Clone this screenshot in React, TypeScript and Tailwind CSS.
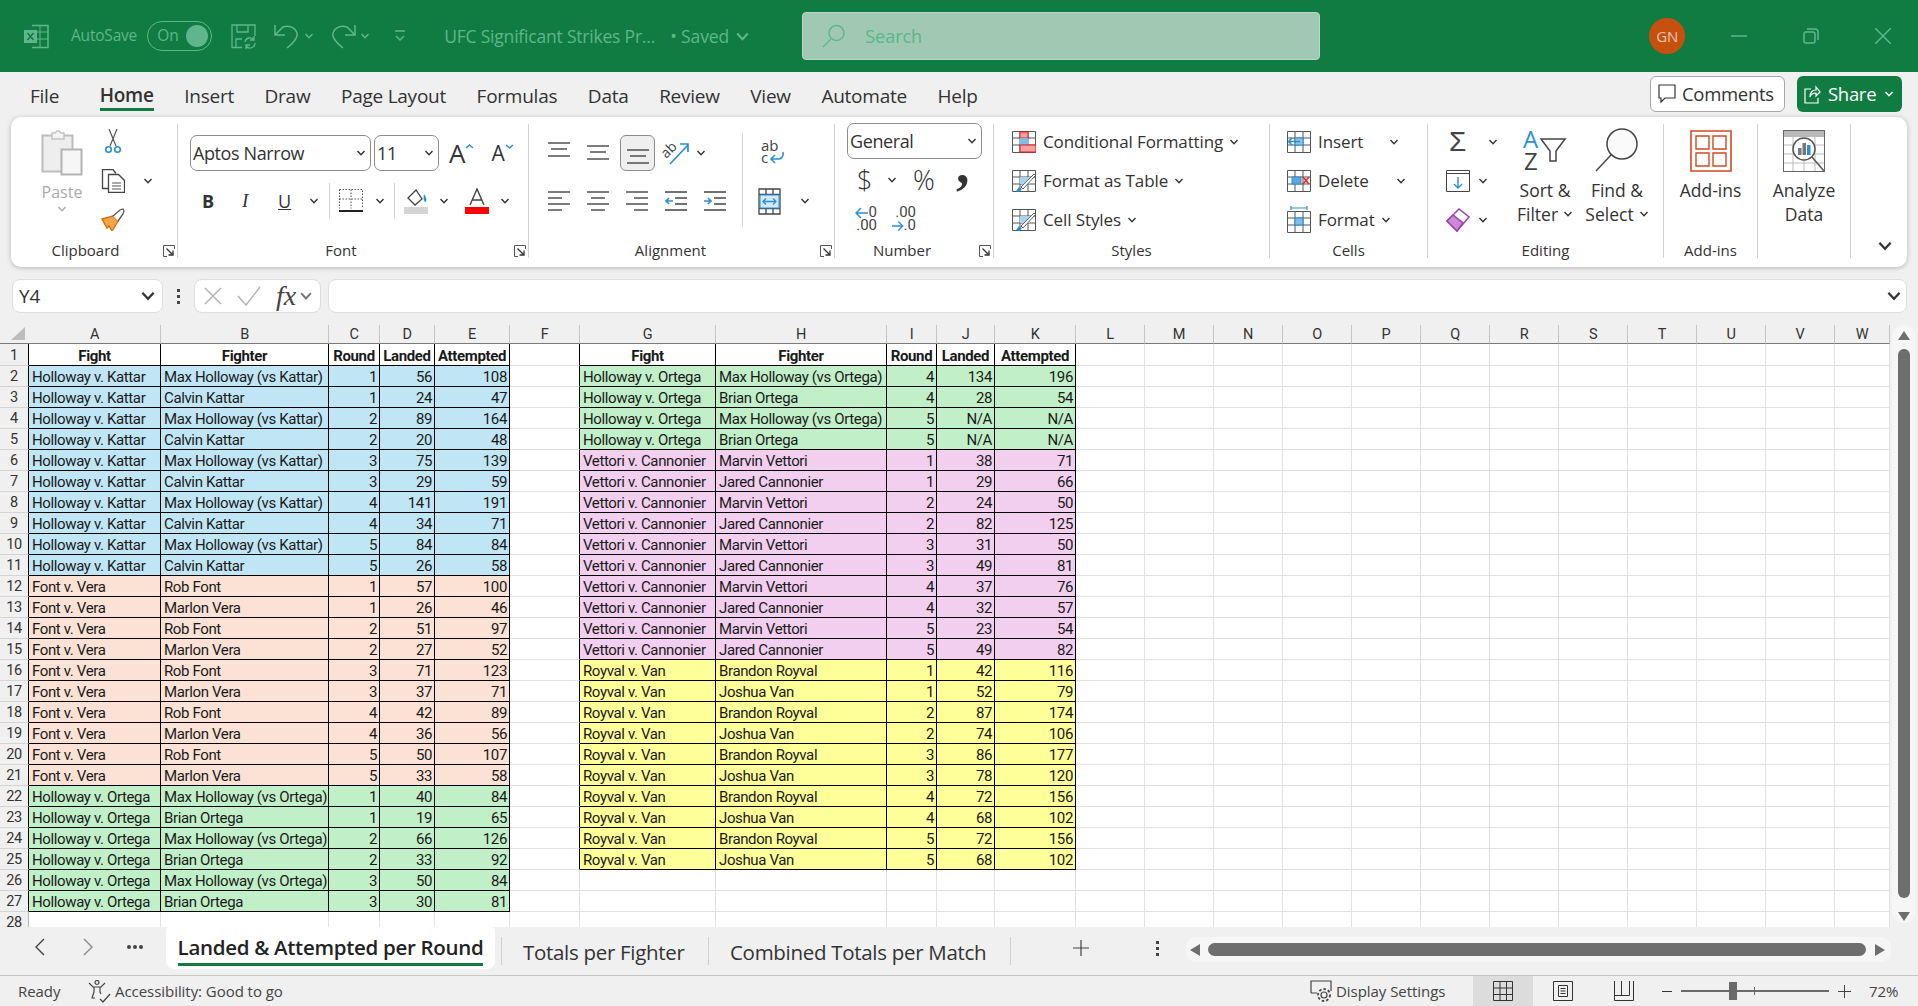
import React from "react";

type Row = [string, string, number, number | string, number | string, string];

const BLUE = "bg-[#c0e6f5]";
const ORANGE = "bg-[#fbe2d5]";
const GREEN = "bg-[#c1f0c8]";
const PURPLE = "bg-[#f2ceef]";
const YELLOW = "bg-[#ffff99]";

const expand = (
  fight: string,
  a: string,
  b: string,
  fill: string,
  data: [number, number | string, number | string][]
): Row[] => data.map((d, i) => [fight, i % 2 === 0 ? a : b, d[0], d[1], d[2], fill]);

const LEFT_ROWS: Row[] = [
  ...expand("Holloway v. Kattar", "Max Holloway (vs Kattar)", "Calvin Kattar", BLUE, [
    [1, 56, 108], [1, 24, 47], [2, 89, 164], [2, 20, 48], [3, 75, 139],
    [3, 29, 59], [4, 141, 191], [4, 34, 71], [5, 84, 84], [5, 26, 58],
  ]),
  ...expand("Font v. Vera", "Rob Font", "Marlon Vera", ORANGE, [
    [1, 57, 100], [1, 26, 46], [2, 51, 97], [2, 27, 52], [3, 71, 123],
    [3, 37, 71], [4, 42, 89], [4, 36, 56], [5, 50, 107], [5, 33, 58],
  ]),
  ...expand("Holloway v. Ortega", "Max Holloway (vs Ortega)", "Brian Ortega", GREEN, [
    [1, 40, 84], [1, 19, 65], [2, 66, 126], [2, 33, 92], [3, 50, 84], [3, 30, 81],
  ]),
];

const RIGHT_ROWS: Row[] = [
  ...expand("Holloway v. Ortega", "Max Holloway (vs Ortega)", "Brian Ortega", GREEN, [
    [4, 134, 196], [4, 28, 54], [5, "N/A", "N/A"], [5, "N/A", "N/A"],
  ]),
  ...expand("Vettori v. Cannonier", "Marvin Vettori", "Jared Cannonier", PURPLE, [
    [1, 38, 71], [1, 29, 66], [2, 24, 50], [2, 82, 125], [3, 31, 50],
    [3, 49, 81], [4, 37, 76], [4, 32, 57], [5, 23, 54], [5, 49, 82],
  ]),
  ...expand("Royval v. Van", "Brandon Royval", "Joshua Van", YELLOW, [
    [1, 42, 116], [1, 52, 79], [2, 87, 174], [2, 74, 106], [3, 86, 177],
    [3, 78, 120], [4, 72, 156], [4, 68, 102], [5, 72, 156], [5, 68, 102],
  ]),
];

const HEADERS = ["Fight", "Fighter", "Round", "Landed", "Attempted"];
const COLUMNS = "ABCDEFGHIJKLMNOPQRSTUVW".split("");
const TABS = ["File", "Home", "Insert", "Draw", "Page Layout", "Formulas", "Data", "Review", "View", "Automate", "Help"];

const DIM = "#5fb68c";
const INK = "#444444";
const BLUE_ICON = "#2b8fd3";

const Chev = ({ color = "#333333", size = 10 }: { color?: string; size?: number }) => (
  <svg width={size} height={size} viewBox="0 0 10 10" fill="none" className="shrink-0">
    <path d="M1.5 3 5 6.8 8.5 3" stroke={color} strokeWidth="1.4" />
  </svg>
);

const Launcher = () => (
  <svg width="12" height="12" viewBox="0 0 12 12" fill="none" className="shrink-0">
    <path d="M11.5 4V.5H.5v11H4" stroke="#555" />
    <path d="M3.5 3.5 10 10M10 5.5V10H5.5" stroke="#333" strokeWidth="1.3" />
  </svg>
);

const Lines = ({ ys, w = 22, h = 24 }: { ys: [number, number, number][]; w?: number; h?: number }) => (
  <svg width={w} height={h} viewBox={`0 0 ${w} ${h}`} fill="none" className="shrink-0">
    {ys.map((l, i) => (
      <path key={i} d={`M${l[0]} ${l[2]}H${l[1]}`} stroke={INK} strokeWidth="1.4" />
    ))}
  </svg>
);

const GridBase = ({ children }: { children?: React.ReactNode }) => (
  <svg width="24" height="22" viewBox="0 0 24 22" fill="none" className="shrink-0">
    <path d="M.5.5h23v21H.5zM.5 7h23M.5 14h23M8 .5v21M16 .5v21" stroke="#555" />
    {children}
  </svg>
);

const BrushOver = () => (
  <g>
    <path d="M8 7h10v7H8z" fill="#a9d3f2" />
    <path d="M4 21l3-4 3 2-3 3z" fill={BLUE_ICON} />
    <path d="M9 17 22 4l1.5 1.5L11 19z" fill="#fff" stroke="#555" strokeWidth=".9" />
  </g>
);

const Paste = () => (
  <svg width="42" height="46" viewBox="0 0 42 46" fill="none">
    <path d="M1.5 5.5h30v36h-30z" fill="#eeeeee" stroke="#bdbdbd" strokeWidth="2" />
    <path d="M11 5V3h3l2-2h2l2 2h3v6H11z" fill="#f4f4f4" stroke="#c4c4c4" strokeWidth="1.5" />
    <path d="M20.5 19.5h20v25h-20z" fill="#f6f6f6" stroke="#b4b4b4" strokeWidth="2" />
  </svg>
);

const Cut = () => (
  <svg width="18" height="25" viewBox="0 0 18 25" fill="none">
    <path d="M5 0l7 17M13 0 6 17" stroke="#555" strokeWidth="1.2" />
    <circle cx="4.5" cy="20.5" r="2.8" stroke={BLUE_ICON} strokeWidth="1.6" />
    <circle cx="13.5" cy="20.5" r="2.8" stroke={BLUE_ICON} strokeWidth="1.6" />
  </svg>
);

const Copy = () => (
  <svg width="24" height="24" viewBox="0 0 24 24" fill="none">
    <path d="M7 19.5H1.5V.5H12l3 4" stroke="#444" strokeWidth="1.3" />
    <path d="M7.5 5.5h10l6 6v12h-16z" fill="#fff" stroke="#444" strokeWidth="1.3" />
    <path d="M11 14h9M11 17h9M11 20h9" stroke="#555" />
  </svg>
);

const Painter = () => (
  <svg width="24" height="23" viewBox="0 0 24 23" fill="none">
    <path d="M1 11l11-3 5 5-6 10-3-5-2 2z" fill="#f4a64c" stroke="#d66f0a" strokeWidth="1.4" />
    <path d="M12 8l7-6 3-1 1 2-1 3-5 7" fill="#fff" stroke="#555" strokeWidth="1.3" />
  </svg>
);

const BordersIcon = () => (
  <svg width="24" height="24" viewBox="0 0 24 24" fill="none">
    <path d="M.5.5h23v19M.5.5v19M12 .5v19M.5 10h23" stroke="#555" strokeDasharray="1.5 1.5" />
    <path d="M0 22h24" stroke="#222" strokeWidth="2" />
  </svg>
);

const FillIcon = () => (
  <svg width="24" height="26" viewBox="0 0 24 26" fill="none">
    <path d="M4 10l8-8 6 9-7 6z" fill="#fff" stroke="#444" strokeWidth="1.3" />
    <path d="M20 6c2 3 3 5 2 8-2 0-3-3-2-8z" fill={BLUE_ICON} />
    <rect y="19" width="24" height="7" fill="#d4d4d4" />
  </svg>
);

const FontColor = () => (
  <svg width="24" height="26" viewBox="0 0 24 26" fill="none">
    <path d="M5 17 12 1l7 16M7.5 12h9" stroke="#444" strokeWidth="1.4" />
    <rect y="19" width="24" height="7" fill="#ff0000" />
  </svg>
);

const Orientation = () => (
  <svg width="28" height="26" viewBox="0 0 28 26" fill="none">
    <path d="M8 24 26 5M18 4h8v8" stroke={BLUE_ICON} strokeWidth="1.7" />
    <text x="0" y="15" fontSize="14" fill="#444" transform="rotate(-45 7 12)">ab</text>
  </svg>
);

const WrapIcon = () => (
  <svg width="24" height="26" viewBox="0 0 24 26" fill="none">
    <text x="0" y="11" fontSize="15" fill="#444">ab</text>
    <text x="0" y="23" fontSize="15" fill="#444">c</text>
    <path d="M22 12c1 5-2 7-5 7H10M14 15l-4 4 4 4" stroke={BLUE_ICON} strokeWidth="1.6" />
  </svg>
);

const Indent = ({ out }: { out?: boolean }) => (
  <svg width="22" height="22" viewBox="0 0 22 22" fill="none">
    <path d="M0 2h22M10 8h12M10 14h12M0 20h22" stroke={INK} strokeWidth="1.3" />
    {out ? (
      <path d="M8 11H1M4 8l-3 3 3 3" stroke={BLUE_ICON} strokeWidth="1.6" />
    ) : (
      <path d="M0 11h7M4 8l3 3-3 3" stroke={BLUE_ICON} strokeWidth="1.6" />
    )}
  </svg>
);

const Merge = () => (
  <svg width="23" height="27" viewBox="0 0 23 27" fill="none">
    <path d="M1 1h21v25H1zM1 6.500h21M1 20.500h21M8 1v5.500M15 1v5.500M8 20.500V26M15 20.500V26" stroke="#444" strokeWidth="1.3" />
    <rect x="2" y="7" width="19" height="13" fill="#d4e9f8" stroke={BLUE_ICON} />
    <path d="M5 13.500h13M8 10.500l-3 3 3 3M15 10.500l3 3-3 3" stroke={BLUE_ICON} strokeWidth="1.3" />
  </svg>
);

const Decimal = ({ more }: { more?: boolean }) => (
  <div className="flex flex-col w-[24px] h-[26px] text-[15px] leading-[13px] text-[#444] font-['Roboto',sans-serif]">
    <div className="flex justify-end items-center h-[13px]">
      {more ? <span>.00</span> : (
        <>
          <svg width="13" height="12" viewBox="0 0 13 12" fill="none" className="mr-[1px]">
            <path d="M13 6H1M6 1 1 6l5 5" stroke={BLUE_ICON} strokeWidth="1.5" />
          </svg>
          <span>0</span>
        </>
      )}
    </div>
    <div className="flex justify-end items-center h-[13px]">
      {more ? (
        <>
          <svg width="13" height="12" viewBox="0 0 13 12" fill="none">
            <path d="M0 6h12M7 1l5 5-5 5" stroke={BLUE_ICON} strokeWidth="1.5" />
          </svg>
          <span>.0</span>
        </>
      ) : <span>.00</span>}
    </div>
  </div>
);

const CondFormat = () => (
  <GridBase>
    <rect x="8" y="1" width="8" height="6" fill="#f4a3a3" stroke="#e21b1b" />
    <rect x="8" y="7" width="8" height="7" fill="#7fbdea" />
    <rect x="8" y="14" width="16" height="7" fill="#f4a3a3" stroke="#e21b1b" />
  </GridBase>
);

const TableStyle = () => <GridBase><BrushOver /></GridBase>;

const InsertCells = () => (
  <GridBase>
    <rect x="8" y="7" width="8" height="7" fill="#8cc3ea" stroke={BLUE_ICON} />
    <path d="M13 10.500H2M5 7l-3.500 3.500L5 14" stroke={BLUE_ICON} strokeWidth="1.600" />
  </GridBase>
);

const DeleteCells = () => (
  <GridBase>
    <rect x="5" y="7" width="9" height="7" fill="#5da8dd" stroke={BLUE_ICON} />
    <path d="M16 7l6 7M22 7l-6 7" stroke="#e82a2a" strokeWidth="1.600" />
  </GridBase>
);

const FormatCells = () => (
  <svg width="24" height="27" viewBox="0 0 24 27" fill="none">
    <path d="M4 2h16M4 0v4M20 0v4" stroke={BLUE_ICON} strokeWidth="1.200" />
    <path d="M.5 5.500h23v21H.5zM.5 12h23M.5 19h23M8 5.500v21M16 5.500v21" stroke="#555" />
    <rect x="8" y="12" width="8" height="7" fill="#7fbdea" stroke={BLUE_ICON} />
  </svg>
);

const FillDown = () => (
  <svg width="24" height="22" viewBox="0 0 24 22" fill="none">
    <path d="M.5.5h23v21H.5z" stroke="#444" />
    <path d="M.5 3.500h23" stroke="#444" />
    <path d="M12 7v11M8 14l4 4 4-4" stroke={BLUE_ICON} strokeWidth="1.400" />
  </svg>
);

const Eraser = () => (
  <svg width="24" height="24" viewBox="0 0 24 24" fill="none">
    <path d="M1 13 13 1l10 8L11 23z" fill="#fff" stroke="#a23fb3" strokeWidth="1.500" />
    <path d="M1 13l6-6 10 8-6 8z" fill="#c98ad6" stroke="#a23fb3" strokeWidth="1.500" />
  </svg>
);

const SortFilter = () => (
  <svg width="44" height="42" viewBox="0 0 44 42" fill="none">
    <text x="0" y="20" fontSize="24" fill={BLUE_ICON}>A</text>
    <text x="1" y="42" fontSize="24" fill="#444">Z</text>
    <path d="M18 11h24L33 23v10h-6V23z" fill="#fff" stroke="#444" strokeWidth="1.500" />
  </svg>
);

const FindIcon = () => (
  <svg width="44" height="44" viewBox="0 0 44 44" fill="none">
    <circle cx="27" cy="16" r="15" fill="#fafafa" stroke="#444" strokeWidth="1.500" />
    <path d="M16 27 1 43" stroke="#444" strokeWidth="1.500" />
  </svg>
);

const AddIns = () => (
  <svg width="42" height="42" viewBox="0 0 42 42" fill="none">
    <path d="M1 1h40v40H1z" stroke="#d14a22" strokeWidth="1.600" />
    <path d="M6 6h13v13H6zM23 6h13v13H23zM6 23h13v13H6zM23 23h13v13H23z" stroke="#d14a22" strokeWidth="1.400" />
  </svg>
);

const Analyze = () => (
  <svg width="42" height="42" viewBox="0 0 42 42" fill="none">
    <rect x=".5" y=".5" width="41" height="41" fill="#fff" stroke="#666" />
    <rect x="1" y="1" width="40" height="6" fill="#b9b9b9" />
    <path d="M1 15h40M1 24h40M1 33h40M10 7v34M21 7v34M32 7v34" stroke="#bbb" />
    <circle cx="21" cy="19" r="11" fill="#fff" stroke="#555" strokeWidth="1.500" />
    <path d="M29 27l12 14" stroke="#555" strokeWidth="1.500" />
    <rect x="15" y="18" width="3.500" height="7" fill="#777" />
    <rect x="19.500" y="13" width="3.500" height="12" fill="#777" />
    <rect x="24" y="15" width="3.500" height="10" fill={BLUE_ICON} />
  </svg>
);

const Group = ({
  w,
  label,
  launcher,
  labelClass = "",
  children,
}: {
  w: string;
  label?: string;
  launcher?: boolean;
  labelClass?: string;
  children: React.ReactNode;
}) => (
  <div className={`${w} h-[138px] flex shrink-0`}>
    <div className="flex-1 min-w-0 flex flex-col">
      <div className="flex-1 min-h-0 flex">{children}</div>
      <div className="h-[15px] flex items-center relative">
        <span className={`w-full text-center text-[15px] text-[#333] leading-none ${labelClass}`}>{label}</span>
        {launcher && (
          <span className="absolute right-[2px] top-[2px]">
            <Launcher />
          </span>
        )}
      </div>
    </div>
    <div className="w-px h-[134px] mt-[4px] bg-[#d2d2d2]" />
  </div>
);

const Select = ({ w, text, className = "" }: { w: string; text: string; className?: string }) => (
  <div className={`${w} h-[36px] border border-[#8c8c8c] rounded-[7px] bg-white flex items-center justify-between pl-[2px] pr-[4px] text-[18px] text-[#333] shrink-0 ${className}`}>
    <span className="tracking-[-0.4px]">{text}</span>
    <Chev />
  </div>
);

const ListRow = ({ icon, ml, text, tail }: { icon: React.ReactNode; ml: string; text: string; tail: string }) => (
  <div className={`h-[39px] flex items-center ${ml}`}>
    <span className="w-[24px] flex justify-center shrink-0">{icon}</span>
    <span className="ml-[7px] text-[17px] text-[#333] tracking-[-0.1px] whitespace-nowrap">{text}</span>
    <span className={tail}>
      <Chev />
    </span>
  </div>
);

const TitleBar = () => (
  <div className="h-[72px] bg-[#107c41] flex items-center shrink-0 text-[16px]">
    <svg width="25" height="25" viewBox="0 0 25 25" fill="none" className="ml-[24px]">
      <path d="M8 1.500h16v22H8" stroke={DIM} strokeWidth="1.500" />
      <path d="M8 8h16M8 15h16M16 1.500v22" stroke={DIM} />
      <rect x="0" y="6" width="13" height="13" fill={DIM} />
      <path d="M3.500 9l6 7M9.500 9l-6 7" stroke="#107c41" strokeWidth="1.600" />
    </svg>
    <span className="ml-[22px] text-[#5fb68c] text-[15.500px] tracking-[-0.2px]">AutoSave</span>
    <div className="ml-[10px] w-[65px] h-[30px] rounded-full border border-[#5fb68c] flex items-center justify-between pl-[9px] pr-[3px]">
      <span className="text-[#5fb68c] text-[15.500px]">On</span>
      <span className="w-[22px] h-[22px] rounded-full bg-[#5fb68c]" />
    </div>
    <svg width="25" height="25" viewBox="0 0 25 25" fill="none" className="ml-[19px]" stroke={DIM} strokeWidth="1.300">
      <path d="M11 23.500H1V1h23v11M6 1v7h11V1M5 23v-8h6" />
      <path d="M14 18a5 5 0 0 1 9-2M24 19a5 5 0 0 1-9 3M23 12v4h-4M15 25v-4h4" />
    </svg>
    <svg width="28" height="26" viewBox="0 0 28 26" fill="none" className="ml-[17px]" stroke={DIM} strokeWidth="1.500">
      <path d="M2 2v10h10M2 12l8-8c8-3 15 3 14 9-1 4-5 8-10 12" />
    </svg>
    <span className="ml-[3px]"><Chev color={DIM} /></span>
    <svg width="28" height="26" viewBox="0 0 28 26" fill="none" className="ml-[15px]" stroke={DIM} strokeWidth="1.500">
      <path d="M26 2v10H16M26 12l-8-8C10 1 3 7 4 13c1 4 5 8 10 12" />
    </svg>
    <span className="ml-[3px]"><Chev color={DIM} /></span>
    <svg width="12" height="14" viewBox="0 0 12 14" fill="none" className="ml-[24px]" stroke={DIM} strokeWidth="1.500">
      <path d="M1 2h10M2 7l4 4 4-4" />
    </svg>
    <span className="ml-[38px] text-[#5fb68c] text-[17.500px] tracking-[-0.2px] w-[208px] whitespace-nowrap">UFC Significant Strikes Pr...</span>
    <span className="ml-[18px] text-[#5fb68c] text-[17.500px] tracking-[-0.1px] whitespace-nowrap">•  Saved</span>
    <span className="ml-[6px]">
      <Chev color={DIM} size={15} />
    </span>
    <div className="ml-[52px] w-[518px] h-[48px] rounded-[4px] bg-[#a0c8b2] border border-[#b9d8c7] flex items-center pl-[19px]">
      <svg width="24" height="24" viewBox="0 0 24 24" fill="none" stroke={DIM} strokeWidth="1.500">
        <circle cx="14.500" cy="9" r="7.500" />
        <path d="M9 15 1 23" />
      </svg>
      <span className="ml-[19px] text-[#5cb58a] text-[18px]">Search</span>
    </div>
    <div className="ml-[329px] w-[36px] h-[36px] rounded-full bg-[#c8500f] flex items-center justify-center text-[#e8c9b5] text-[15px] tracking-[-0.3px]">GN</div>
    <svg width="16" height="2" viewBox="0 0 16 2" className="ml-[46px]"><path d="M0 1h16" stroke={DIM} strokeWidth="1.500" /></svg>
    <svg width="16" height="16" viewBox="0 0 16 16" fill="none" stroke={DIM} strokeWidth="1.500" className="ml-[56px]">
      <rect x="1" y="4" width="11" height="11" rx="2" />
      <path d="M4 1h8a3 3 0 0 1 3 3v8" />
    </svg>
    <svg width="16" height="16" viewBox="0 0 16 16" fill="none" stroke={DIM} strokeWidth="1.500" className="ml-[56px]">
      <path d="M0 0l16 16M16 0 0 16" />
    </svg>
  </div>
);

const TabRow = () => (
  <div className="h-[45px] flex shrink-0 relative">
    <div className="flex items-start pl-[30px] pt-[9px] gap-[30.600px] text-[19px] leading-[30px] text-[#333] tracking-[-0.25px]">
      {TABS.map((t) => (
        <span key={t} className={t === "Home" ? "ml-[10px] font-semibold border-b-[3px] border-[#107c41] h-[30px] leading-[28px]" : ""}>{t}</span>
      ))}
    </div>
    <div className="ml-auto flex items-start pt-[4px] pr-[16px]">
      <div className="w-[135px] h-[36px] border border-[#a8a8a8] rounded-[6px] bg-white flex items-center pl-[7px] text-[18.500px] text-[#333] tracking-[-0.3px]">
        <svg width="18" height="20" viewBox="0 0 18 20" fill="none" stroke="#333" strokeWidth="1.200">
          <path d="M1 1h16v13H7l-4 4v-4H1z" />
        </svg>
        <span className="ml-[6px]">Comments</span>
      </div>
      <div className="ml-[12px] w-[105px] h-[36px] rounded-[6px] bg-[#107c41] flex items-center pl-[7px] text-[18.500px] text-white tracking-[-0.3px]">
        <svg width="17" height="20" viewBox="0 0 17 20" fill="none" stroke="#fff" strokeWidth="1.200">
          <path d="M7 5H1v14h13v-5M6 13c0-5 3-7 6-7V3l4 5-4 4V9c-3 0-5 1-6 4z" />
        </svg>
        <span className="ml-[7px]">Share</span>
        <span className="ml-[8px]"><Chev color="#fff" /></span>
      </div>
    </div>
  </div>
);

const Ribbon = () => (
  <div className="mx-[11px] h-[150px] pt-[3px] bg-white rounded-[10px] shadow-[0_1px_5px_rgba(0,0,0,0.25)] flex shrink-0 text-[#333]">
    <Group w="w-[167px]" label="Clipboard" launcher labelClass="pr-[17px]">
      <div className="ml-[27px] w-[48px] flex flex-col items-center pt-[10px]">
        <Paste />
        <span className="text-[16px] text-[#aaa] leading-[22px] mt-[5px]">Paste</span>
        <span className="mt-[1px]"><Chev color="#aaa" /></span>
      </div>
      <div className="ml-[15px] flex flex-col pt-[2px]">
        <div className="h-[39px] flex items-center pl-[3px]"><Cut /></div>
        <div className="h-[39px] flex items-center">
          <Copy />
          <span className="ml-[18px]"><Chev /></span>
        </div>
        <div className="h-[39px] flex items-center"><Painter /></div>
      </div>
    </Group>

    <Group w="w-[351px]" label="Font" launcher labelClass="pr-[24px]">
      <div className="flex flex-col pt-[15px] pl-[12px]">
        <div className="flex items-center h-[36px]">
          <Select w="w-[181px]" text="Aptos Narrow" />
          <Select w="w-[65px]" text="11" className="ml-[3px]" />
          <span className="ml-[10px] text-[26px] leading-none flex items-start">A<svg width="9" height="7" viewBox="0 0 9 7" fill="none" className="mt-[3px]"><path d="M1 5l3.500-3L8 5" stroke={BLUE_ICON} strokeWidth="1.500" /></svg></span>
          <span className="ml-[17px] text-[21px] leading-none flex items-start">A<svg width="9" height="7" viewBox="0 0 9 7" fill="none"><path d="M1 2l3.500 3L8 2" stroke={BLUE_ICON} strokeWidth="1.500" /></svg></span>
        </div>
        <div className="flex items-center h-[36px] mt-[12px]">
          <span className="ml-[12px] w-[12px] text-[18px] font-bold">B</span>
          <span className="ml-[28px] w-[10px] text-[19px] italic font-['Liberation_Serif',serif]">I</span>
          <span className="ml-[26px] w-[14px] text-[18px] underline">U</span>
          <span className="ml-[17px]"><Chev /></span>
          <span className="ml-[10px] w-px h-[36px] bg-[#d2d2d2]" />
          <span className="ml-[9px]"><BordersIcon /></span>
          <span className="ml-[12px]"><Chev /></span>
          <span className="ml-[9px] w-px h-[36px] bg-[#d2d2d2]" />
          <span className="ml-[9px]"><FillIcon /></span>
          <span className="ml-[11px]"><Chev /></span>
          <span className="ml-[16px]"><FontColor /></span>
          <span className="ml-[11px]"><Chev /></span>
        </div>
      </div>
    </Group>

    <Group w="w-[306px]" label="Alignment" launcher labelClass="pr-[22px]">
      <div className="w-[213px] flex flex-col pt-[15px] pl-[19px]">
        <div className="flex items-center h-[36px]">
          <Lines ys={[[0, 22, 2], [3, 19, 8], [0, 22, 15]]} />
          <span className="ml-[17px]"><Lines ys={[[0, 22, 5], [3, 19, 11], [0, 22, 18]]} /></span>
          <span className="ml-[11px] w-[35px] h-[36px] border border-[#8c8c8c] rounded-[6px] bg-[#efefef] flex items-center justify-center">
            <Lines ys={[[0, 22, 9], [3, 19, 15], [0, 22, 22]]} />
          </span>
          <span className="ml-[7px]"><Orientation /></span>
          <span className="ml-[6px]"><Chev /></span>
        </div>
        <div className="flex items-center h-[36px] mt-[12px]">
          <Lines ys={[[0, 22, 3], [0, 14, 9], [0, 22, 15], [0, 14, 21]]} />
          <span className="ml-[17px]"><Lines ys={[[0, 22, 3], [4, 18, 9], [0, 22, 15], [4, 18, 21]]} /></span>
          <span className="ml-[17px]"><Lines ys={[[0, 22, 3], [8, 22, 9], [0, 22, 15], [8, 22, 21]]} /></span>
          <span className="ml-[17px]"><Indent out /></span>
          <span className="ml-[17px]"><Indent /></span>
        </div>
      </div>
      <div className="w-px h-[94px] mt-[13px] bg-[#d2d2d2]" />
      <div className="flex flex-col pt-[15px]">
        <div className="h-[36px] flex items-center ml-[18px]"><WrapIcon /></div>
        <div className="h-[36px] flex items-center mt-[12px] ml-[15px]">
          <Merge />
          <span className="ml-[19px]"><Chev /></span>
        </div>
      </div>
    </Group>

    <Group w="w-[159px]" label="Number" launcher labelClass="pr-[24px]">
      <div className="flex flex-col pt-[3px] pl-[12px]">
        <Select w="w-[135px]" text="General" />
        <div className="h-[30px] mt-[6px] flex items-center">
          <span className="ml-[10px] w-[16px] text-[27px] font-light">$</span>
          <span className="ml-[14px]"><Chev /></span>
          <span className="ml-[16px] w-[26px] text-[27px] font-light">%</span>
          <span className="ml-[17px] w-[13px] h-[30px] text-[54px] leading-[30px] font-['Liberation_Serif',serif] font-bold -translate-y-[15px]">,</span>
        </div>
        <div className="h-[26px] mt-[11px] flex items-center">
          <span className="ml-[6px]"><Decimal /></span>
          <span className="ml-[15px]"><Decimal more /></span>
        </div>
      </div>
    </Group>

    <Group w="w-[276px]" label="Styles">
      <div className="flex flex-col pt-[2px]">
        <ListRow icon={<CondFormat />} ml="ml-[18px]" text="Conditional Formatting" tail="ml-[6px]" />
        <ListRow icon={<TableStyle />} ml="ml-[18px]" text="Format as Table" tail="ml-[6px]" />
        <ListRow icon={<TableStyle />} ml="ml-[18px]" text="Cell Styles" tail="ml-[6px]" />
      </div>
    </Group>

    <Group w="w-[158px]" label="Cells">
      <div className="flex flex-col pt-[2px]">
        <ListRow icon={<InsertCells />} ml="ml-[17px]" text="Insert" tail="ml-[26px]" />
        <ListRow icon={<DeleteCells />} ml="ml-[17px]" text="Delete" tail="ml-[27px]" />
        <ListRow icon={<FormatCells />} ml="ml-[17px]" text="Format" tail="ml-[6px]" />
      </div>
    </Group>

    <Group w="w-[236px]" label="Editing">
      <div className="w-[81px] flex flex-col pt-[2px]">
        <div className="h-[39px] flex items-center pl-[21px]">
          <span className="w-[18px] text-[28px] font-light leading-none text-[#444] font-['Liberation_Sans',sans-serif]">Σ</span>
          <span className="ml-[21px]"><Chev /></span>
        </div>
        <div className="h-[39px] flex items-center pl-[18px]">
          <FillDown />
          <span className="ml-[8px]"><Chev /></span>
        </div>
        <div className="h-[39px] flex items-center pl-[18px]">
          <Eraser />
          <span className="ml-[8px]"><Chev /></span>
        </div>
      </div>
      <div className="w-[72px] flex flex-col items-center pt-[8px]">
        <SortFilter />
        <span className="mt-[8px] text-[17.500px] leading-[24px] whitespace-nowrap">Sort &amp;</span>
        <span className="text-[17.500px] leading-[24px] flex items-center">Filter<span className="ml-[5px]"><Chev /></span></span>
      </div>
      <div className="w-[72px] flex flex-col items-center pt-[8px]">
        <FindIcon />
        <span className="mt-[6px] text-[17.500px] leading-[24px] whitespace-nowrap">Find &amp;</span>
        <span className="text-[17.500px] leading-[24px] flex items-center">Select<span className="ml-[5px]"><Chev /></span></span>
      </div>
    </Group>

    <Group w="w-[94px]" label="Add-ins">
      <div className="w-full flex flex-col items-center pt-[10px]">
        <AddIns />
        <span className="mt-[6px] text-[17.500px] leading-[24px]">Add-ins</span>
      </div>
    </Group>

    <Group w="w-[93px]">
      <div className="w-full flex flex-col items-center pt-[10px]">
        <Analyze />
        <span className="mt-[6px] text-[17.500px] leading-[24px]">Analyze</span>
        <span className="text-[17.500px] leading-[24px]">Data</span>
      </div>
    </Group>

    <div className="flex-1 flex justify-center items-end pb-[13px] pl-[12px]">
      <Chev size={16} />
    </div>
  </div>
);

const FormulaBar = () => (
  <div className="h-[34px] mt-[12px] ml-[12px] flex shrink-0">
    <div className="w-[151px] bg-white border border-[#dedede] rounded-[8px] flex items-center justify-between pl-[6px] pr-[6px] text-[19px] text-[#333]">
      <span>Y4</span>
      <Chev size={16} />
    </div>
    <div className="w-[31px] flex flex-col items-center justify-center gap-[3px]">
      <span className="w-[3px] h-[3px] bg-[#444]" />
      <span className="w-[3px] h-[3px] bg-[#444]" />
      <span className="w-[3px] h-[3px] bg-[#444]" />
    </div>
    <div className="w-[127px] bg-white border border-[#dedede] rounded-[8px] flex items-center pl-[8px]">
      <svg width="20" height="20" viewBox="0 0 20 20" fill="none" stroke="#b4b4b4" strokeWidth="1.500"><path d="M2 2l16 16M18 2 2 18" /></svg>
      <svg width="24" height="20" viewBox="0 0 24 20" fill="none" stroke="#b4b4b4" strokeWidth="1.500" className="ml-[14px]"><path d="M1 10l8 9L23 1" /></svg>
      <span className="ml-[15px] w-[22px] text-[28px] leading-none italic font-['Liberation_Serif',serif] text-[#444]">fx</span>
      <span className="ml-[1px]"><Chev color="#777" size={14} /></span>
    </div>
    <div className="ml-[7px] w-[1579px] bg-white border border-[#dedede] rounded-[8px] flex items-center justify-end pr-[4px]">
      <Chev size={16} />
    </div>
  </div>
);

const Cell = ({ text, fill, right, head, kind }: {
  text?: React.ReactNode;
  fill?: string;
  right?: boolean;
  head?: boolean;
  kind: "data" | "edge" | "plain";
}) => (
  <div
    className={`flex items-center overflow-hidden whitespace-nowrap leading-none pt-[3px] text-[#1a1a1a] border-b border-r ${
      kind === "data" ? "border-black" : kind === "edge" ? "border-r-black border-b-[#e2e2e2]" : "border-[#e2e2e2]"
    } ${fill ?? "bg-white"} ${head ? "justify-center font-bold" : right ? "justify-end pr-[2px]" : "pl-[3px]"}`}
  >
    {text}
  </div>
);

const Sheet = () => {
  const rowCells = (row: number) => {
    const out: React.ReactNode[] = [];
    const left = row === 1 ? null : LEFT_ROWS[row - 2];
    const right = row === 1 ? null : RIGHT_ROWS[row - 2];
    const hasLeft = row === 1 || !!left;
    const hasRight = row === 1 || !!right;
    const block = (prefix: string, r: Row | null) => {
      for (let i = 0; i < 5; i++) {
        const val = r ? r[i] : HEADERS[i];
        out.push(
          <Cell key={`${prefix}${row}-${i}`} kind="data" text={val} fill={r ? r[5] : undefined} right={!!r && i >= 2} head={!r} />
        );
      }
    };
    out.push(
      <div key={`h${row}`} className={`bg-[#f0f0f0] flex items-center justify-center pt-[3px] text-[14.500px] leading-none text-[#333] border-b border-r border-b-[#d4d4d4] ${hasLeft ? "border-r-black" : "border-r-[#b8b8b8]"}`}>
        {row}
      </div>
    );
    if (hasLeft) block("l", left);
    else for (let i = 0; i < 5; i++) out.push(<Cell key={`l${row}-${i}`} kind="plain" />);
    out.push(<Cell key={`f${row}`} kind={hasRight ? "edge" : "plain"} />);
    if (hasRight) block("r", right);
    else for (let i = 0; i < 5; i++) out.push(<Cell key={`r${row}-${i}`} kind="plain" />);
    for (let i = 0; i < 12; i++) out.push(<Cell key={`x${row}-${i}`} kind="plain" />);
    return out;
  };

  return (
    <div className="h-[602px] mt-[12px] flex shrink-0 overflow-hidden">
      <div className="w-[1890px] shrink-0 overflow-hidden bg-white font-['Roboto',sans-serif] text-[15px] tracking-[-0.37px]">
        <div className="grid grid-cols-[29px_132px_168px_51px_55px_75px_70px_136px_171px_50px_58px_81px_repeat(11,69px)_55px] grid-rows-[19px_22px_repeat(27,21px)]">
          <div className="bg-[#f0f0f0] border-b border-b-[#7a7a7a] flex items-end justify-end pr-[4px] pb-[3px]">
            <svg width="14" height="13" viewBox="0 0 14 13"><path d="M14 0v13H0z" fill="#bdbdbd" /></svg>
          </div>
          {COLUMNS.map((c) => (
            <div key={c} className="bg-[#f0f0f0] border-b border-b-[#7a7a7a] border-r border-r-[#c4c4c4] flex items-center justify-center pt-[3px] text-[14.500px] leading-none text-[#333]">
              {c}
            </div>
          ))}
          {Array.from({ length: 28 }, (_, i) => rowCells(i + 1))}
        </div>
      </div>
      <div className="flex-1 flex justify-center">
        <div className="w-[24px] h-[598px] bg-[#f6f6f6] rounded-[12px] flex flex-col items-center pt-[6px]">
          <svg width="12" height="9" viewBox="0 0 12 9"><path d="M6 0l6 9H0z" fill="#6e6e6e" /></svg>
          <div className="w-[12px] h-[549px] mt-[9px] rounded-[6px] bg-[#6e6e6e]" />
          <svg width="12" height="9" viewBox="0 0 12 9" className="mt-[14px]"><path d="M0 0h12L6 9z" fill="#6e6e6e" /></svg>
        </div>
      </div>
    </div>
  );
};

const SheetTabs = () => (
  <div className="h-[48px] flex shrink-0 text-[#333] relative">
    <div className="w-[166px] flex items-center pb-[8px] shrink-0">
      <svg width="12" height="18" viewBox="0 0 12 18" fill="none" stroke="#444" strokeWidth="1.400" className="ml-[34px]"><path d="M10 1 2 9l8 8" /></svg>
      <svg width="12" height="18" viewBox="0 0 12 18" fill="none" stroke="#8a8a8a" strokeWidth="1.400" className="ml-[36px]"><path d="M2 1l8 8-8 8" /></svg>
      <span className="ml-[33px] flex gap-[2px]">
        <span className="w-[4px] h-[4px] rounded-full bg-[#444]" />
        <span className="w-[4px] h-[4px] rounded-full bg-[#444]" />
        <span className="w-[4px] h-[4px] rounded-full bg-[#444]" />
      </span>
    </div>
    <div className="w-[329px] h-[42px] bg-white rounded-b-[8px] rounded-t-[4px] flex flex-col items-center pt-[6px] shrink-0">
      <span className="text-[20.500px] leading-[28px] font-semibold tracking-[-0.3px] text-[#222] whitespace-nowrap">Landed &amp; Attempted per Round</span>
      <span className="w-[305px] h-[3px] mt-[2px] bg-[#107c41]" />
    </div>
    <div className="h-[48px] flex items-start pl-[6px] text-[20.500px] tracking-[-0.3px] whitespace-nowrap">
      <span className="w-px h-[28px] mt-[10px] bg-[#d0d0d0]" />
      <span className="ml-[21px] mt-[11px] leading-[28px] w-[163px]">Totals per Fighter</span>
      <span className="ml-[22px] w-px h-[28px] mt-[10px] bg-[#d0d0d0]" />
      <span className="ml-[21px] mt-[11px] leading-[28px] w-[258px]">Combined Totals per Match</span>
      <span className="ml-[22px] w-px h-[28px] mt-[10px] bg-[#d0d0d0]" />
    </div>
    <svg width="16" height="16" viewBox="0 0 16 16" fill="none" stroke="#444" strokeWidth="1.200" className="ml-[62px] mt-[13px]"><path d="M8 0v16M0 8h16" /></svg>
    <span className="ml-[67px] mt-[14px] flex flex-col gap-[3px]">
      <span className="w-[3px] h-[3px] bg-[#444]" />
      <span className="w-[3px] h-[3px] bg-[#444]" />
      <span className="w-[3px] h-[3px] bg-[#444]" />
    </span>
    <div className="ml-[27px] w-[705px] h-[25px] mt-[10px] rounded-[10px] bg-[#f6f6f6] flex items-center pl-[4px]">
      <svg width="10" height="12" viewBox="0 0 10 12"><path d="M0 6l10-6v12z" fill="#6e6e6e" /></svg>
      <div className="ml-[8px] w-[658px] h-[13px] rounded-full bg-[#6e6e6e]" />
      <svg width="10" height="12" viewBox="0 0 10 12" className="ml-[9px]"><path d="M10 6 0 0v12z" fill="#6e6e6e" /></svg>
    </div>
  </div>
);

const StatusBar = () => (
  <div className="h-[31px] border-t border-[#c6c6c6] flex items-center text-[15px] text-[#444] shrink-0 tracking-[-0.05px]">
    <span className="ml-[18px] w-[42px]">Ready</span>
    <svg width="23" height="23" viewBox="0 0 23 23" fill="none" stroke="#444" strokeWidth="1.200" className="ml-[28px]">
      <circle cx="9" cy="2.500" r="2" />
      <path d="M1 3l4 4h8l4-4M6 7v5l-2 6h3M12 7v5l1 2M12 19l3 3 7-8" />
    </svg>
    <span className="ml-[4px] w-[172px] whitespace-nowrap">Accessibility: Good to go</span>
    <svg width="22" height="22" viewBox="0 0 22 22" fill="none" stroke="#444" strokeWidth="1.200" className="ml-[1023px]">
      <path d="M1 13V1h20v10M1 13h6" />
      <circle cx="14" cy="15" r="3" />
      <circle cx="14" cy="15" r="6" strokeDasharray="2.500 2" strokeWidth="1.800" />
    </svg>
    <span className="ml-[4px] w-[112px] whitespace-nowrap">Display Settings</span>
    <div className="ml-[25px] w-[60px] h-full bg-[#dcdcdc] flex items-center justify-center">
      <svg width="20" height="20" viewBox="0 0 20 20" fill="none" stroke="#333"><path d="M.5.5h19v19H.5zM.5 7h19M.5 13.500h19M7 .5v19M13.500.5v19" /></svg>
    </div>
    <span className="ml-[20px]">
      <svg width="20" height="20" viewBox="0 0 20 20" fill="none" stroke="#333"><path d="M.5.5h19v19H.5zM5.500 4.500h9v11h-9zM7.500 7.500h5M7.500 10h5M7.500 12.500h5" /></svg>
    </span>
    <span className="ml-[41px]">
      <svg width="20" height="20" viewBox="0 0 20 20" fill="none" stroke="#333"><path d="M.5 0v19.500h19V0M.5 14.500h15V0M7.500 0v14.500" /></svg>
    </span>
    <span className="ml-[28px] w-[10px] h-px bg-[#333]" />
    <div className="ml-[9px] w-[148px] h-[18px] flex items-center">
      <span className="w-[48px] h-[2px] bg-[#6a6a6a]" />
      <span className="w-[8px] h-[18px] bg-[#6a6a6a]" />
      <span className="w-[17px] h-[2px] bg-[#6a6a6a]" />
      <span className="w-px h-[8px] bg-[#6a6a6a]" />
      <span className="flex-1 h-[2px] bg-[#6a6a6a]" />
    </div>
    <svg width="13" height="13" viewBox="0 0 13 13" stroke="#444" className="ml-[9px]"><path d="M6.500 0v13M0 6.500h13" /></svg>
    <span className="ml-[18px]">72%</span>
  </div>
);

export default function App() {
  return (
    <div className="w-[1918px] h-[1006px] bg-[#f0f0f0] flex flex-col overflow-hidden font-['Open_Sans',sans-serif]">
      <TitleBar />
      <TabRow />
      <Ribbon />
      <FormulaBar />
      <Sheet />
      <SheetTabs />
      <StatusBar />
    </div>
  );
}
